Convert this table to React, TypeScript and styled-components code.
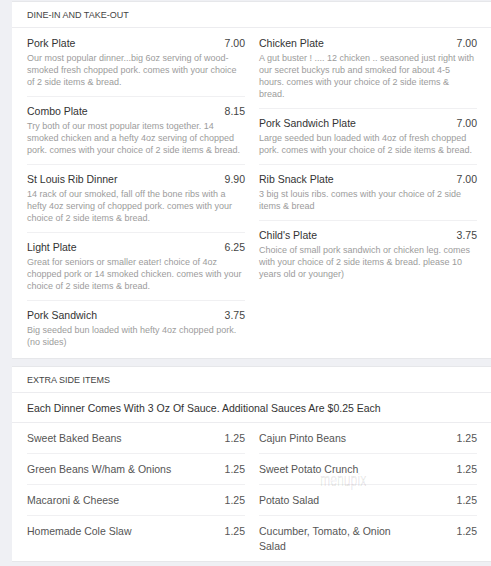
import React from "react";
import styled, { createGlobalStyle } from "styled-components";

const Global = createGlobalStyle`
  html, body { margin: 0; padding: 0; background: #eff0f4; }
  body { font-family: "Liberation Sans", Arial, sans-serif; overflow: hidden; }
`;

const Page = styled.div`
  width: 491px;
  height: 566px;
  padding-top: 1px;
  box-sizing: border-box;
  display: flex;
  flex-direction: column;
  gap: 7px;
  overflow: hidden;
`;

const Card = styled.section`
  position: relative;
  margin-left: 12px;
  width: 482px;
  flex: none;
  background: #fff;
  border-top: 1px solid #e6e7ea;
  border-bottom: 1px solid #e6e7ea;
`;

const CardHeader = styled.div`
  height: 25px;
  display: flex;
  align-items: center;
  padding: 0 15px;
  font-size: 9px;
  color: #444;
  text-transform: uppercase;
  border-bottom: 1px solid #ececef;
`;

const Note = styled.div`
  height: 29px;
  display: flex;
  align-items: center;
  padding: 0 15px;
  font-size: 10.5px;
  color: #333;
  border-bottom: 1px solid #ececef;
`;

const Columns = styled.div<{ $padTop: number; $padBottom: number }>`
  display: grid;
  grid-template-columns: 218px 218px;
  column-gap: 14px;
  padding: ${(p) => p.$padTop}px 15px ${(p) => p.$padBottom}px;
  align-items: start;
`;

const Column = styled.div`
  display: flex;
  flex-direction: column;
`;

const Item = styled.div`
  padding: 7px 0 8px;
  border-bottom: 1px solid #f0f0f2;
  &:last-child { border-bottom: none; }
`;

const ItemHead = styled.div`
  display: flex;
  justify-content: space-between;
  font-size: 10.5px;
  line-height: 14px;
  color: #333;
  margin-bottom: 2px;
`;

const Price = styled.span`
  color: #444;
`;

const Desc = styled.div`
  font-size: 9px;
  line-height: 12px;
  color: #9c9c9c;
`;

const SideRow = styled.div`
  display: flex;
  justify-content: space-between;
  align-items: flex-start;
  padding: 8px 0 7px;
  font-size: 10.5px;
  line-height: 15px;
  color: #555;
  border-bottom: 1px solid #f0f0f2;
  &:last-child { border-bottom: none; }
`;

const SideName = styled.span`
  max-width: 70%;
`;

const Watermark = styled.div`
  position: absolute;
  left: 308px;
  top: 104px;
  font-family: "Liberation Sans", Arial, sans-serif;
  font-size: 18px;
  line-height: 18px;
  transform: scaleX(0.68);
  transform-origin: left top;
  color: rgba(0, 0, 0, 0.05);
  -webkit-text-stroke: 0.6px rgba(0, 0, 0, 0.1);
  pointer-events: none;
`;

type MenuItem = { name: string; price: string; desc: string };

const leftItems: MenuItem[] = [
  {
    name: "Pork Plate",
    price: "7.00",
    desc: "Our most popular dinner...big 6oz serving of wood-smoked fresh chopped pork. comes with your choice of 2 side items & bread.",
  },
  {
    name: "Combo Plate",
    price: "8.15",
    desc: "Try both of our most popular items together. 14 smoked chicken and a hefty 4oz serving of chopped pork. comes with your choice of 2 side items & bread.",
  },
  {
    name: "St Louis Rib Dinner",
    price: "9.90",
    desc: "14 rack of our smoked, fall off the bone ribs with a hefty 4oz serving of chopped pork. comes with your choice of 2 side items & bread.",
  },
  {
    name: "Light Plate",
    price: "6.25",
    desc: "Great for seniors or smaller eater! choice of 4oz chopped pork or 14 smoked chicken. comes with your choice of 2 side items & bread.",
  },
  {
    name: "Pork Sandwich",
    price: "3.75",
    desc: "Big seeded bun loaded with hefty 4oz chopped pork. (no sides)",
  },
];

const rightItems: MenuItem[] = [
  {
    name: "Chicken Plate",
    price: "7.00",
    desc: "A gut buster ! .... 12 chicken .. seasoned just right with our secret buckys rub and smoked for about 4-5 hours. comes with your choice of 2 side items & bread.",
  },
  {
    name: "Pork Sandwich Plate",
    price: "7.00",
    desc: "Large seeded bun loaded with 4oz of fresh chopped pork. comes with your choice of 2 side items & bread.",
  },
  {
    name: "Rib Snack Plate",
    price: "7.00",
    desc: "3 big st louis ribs. comes with your choice of 2 side items & bread",
  },
  {
    name: "Child's Plate",
    price: "3.75",
    desc: "Choice of small pork sandwich or chicken leg. comes with your choice of 2 side items & bread. please 10 years old or younger)",
  },
];

const leftSides = [
  "Sweet Baked Beans",
  "Green Beans W/ham & Onions",
  "Macaroni & Cheese",
  "Homemade Cole Slaw",
];
const rightSides = [
  "Cajun Pinto Beans",
  "Sweet Potato Crunch",
  "Potato Salad",
  "Cucumber, Tomato, & Onion Salad",
];

const ItemList = ({ items }: { items: MenuItem[] }) => (
  <Column>
    {items.map((it) => (
      <Item key={it.name}>
        <ItemHead>
          <span>{it.name}</span>
          <Price>{it.price}</Price>
        </ItemHead>
        <Desc>{it.desc}</Desc>
      </Item>
    ))}
  </Column>
);

const SideList = ({ items }: { items: string[] }) => (
  <Column>
    {items.map((n) => (
      <SideRow key={n}>
        <SideName>{n}</SideName>
        <span>1.25</span>
      </SideRow>
    ))}
  </Column>
);

export default function App() {
  return (
    <>
      <Global />
      <Page>
        <Card>
          <CardHeader>Dine-In and Take-Out</CardHeader>
          <Columns $padTop={1} $padBottom={2}>
            <ItemList items={leftItems} />
            <ItemList items={rightItems} />
          </Columns>
        </Card>
        <Card>
          <CardHeader>Extra Side Items</CardHeader>
          <Note>Each Dinner Comes With 3 Oz Of Sauce. Additional Sauces Are $0.25 Each</Note>
          <Columns $padTop={0} $padBottom={0}>
            <SideList items={leftSides} />
            <SideList items={rightSides} />
          </Columns>
          <Watermark>menupix</Watermark>
        </Card>
      </Page>
    </>
  );
}
